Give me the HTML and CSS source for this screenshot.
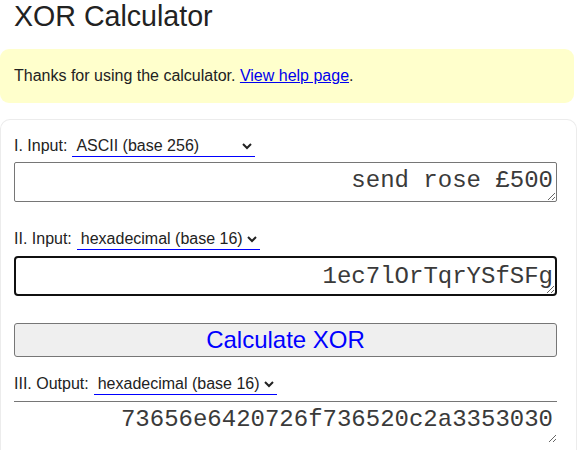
FILE: index.html
```html
<!DOCTYPE html>
<html lang="en">
<head>
<meta charset="utf-8">
<title>XOR Calculator</title>
<link rel="stylesheet" href="styles.css">
</head>
<body>
<h1 class="title">XOR Calculator</h1>
<div class="notice">Thanks for using the calculator. <a class="notice-link" href="#">View help page</a>.</div>
<div class="card">
  <div class="field-row">
    <label class="field-label" for="in1-base">I. Input:</label>
    <select class="base-select" id="in1-base">
      <option>binary (base 2)</option>
      <option>octal (base 8)</option>
      <option>decimal (base 10)</option>
      <option>hexadecimal (base 16)</option>
      <option>base64 (base 64)</option>
      <option selected>ASCII (base 256)</option>
    </select>
  </div>
  <textarea class="value-box" rows="1">send rose £500</textarea>

  <div class="field-row field-row-spaced">
    <label class="field-label" for="in2-base">II. Input:</label>
    <select class="base-select" id="in2-base">
      <option>binary (base 2)</option>
      <option>octal (base 8)</option>
      <option>decimal (base 10)</option>
      <option selected>hexadecimal (base 16)</option>
      <option>base64 (base 64)</option>
      <option>ASCII (base 256)</option>
    </select>
  </div>
  <textarea class="value-box value-box-focused" rows="1">1ec7lOrTqrYSfSFg</textarea>

  <button class="calc-button" type="button">Calculate XOR</button>

  <div class="field-row field-row-after-button">
    <label class="field-label" for="out-base">III. Output:</label>
    <select class="base-select" id="out-base">
      <option>binary (base 2)</option>
      <option>octal (base 8)</option>
      <option>decimal (base 10)</option>
      <option selected>hexadecimal (base 16)</option>
      <option>base64 (base 64)</option>
      <option>ASCII (base 256)</option>
    </select>
  </div>
  <textarea class="value-box value-box-output" rows="1" readonly>73656e6420726f736520c2a3353030</textarea>
</div>
</body>
</html>
```

FILE: styles.css
```css
html, body {
  margin: 0;
  padding: 0;
  background: #ffffff;
}

body {
  font-family: Arial, "Liberation Sans", sans-serif;
  color: #222222;
  font-size: 16px;
  overflow: hidden;
}

.title {
  margin: 0 0 17px 0;
  padding-left: 14px;
  font-size: 28.6px;
  font-weight: normal;
  line-height: 32px;
  color: #222222;
}

.notice {
  margin: 0 11px 16px 0;
  padding: 17px 14px;
  line-height: 20px;
  background: #ffffcc;
  border-radius: 9px;
}

.notice-link {
  color: #0000ee;
  text-decoration: underline;
}

.card {
  margin-right: 8px;
  padding: 16px 18px 0 13px;
  border: 1px solid #ececec;
  border-bottom: 0;
  border-radius: 10px 10px 0 0;
  height: 314px;
}

.field-row {
  display: flex;
  align-items: baseline;
  gap: 5px;
}

.field-row-spaced {
  margin-top: 27px;
}

.field-row-after-button {
  margin-top: 17px;
}

.field-label {
  font-size: 16px;
  color: #222222;
}

.base-select {
  width: 183px;
  height: 21px;
  font-family: Arial, "Liberation Sans", sans-serif;
  font-size: 16px;
  color: #222222;
  background: transparent;
  border: 0;
  border-bottom: 1px solid #0000ff;
  border-radius: 0;
  padding: 0 0 1px 0;
  outline: none;
}

.value-box {
  display: block;
  box-sizing: border-box;
  width: 543px;
  height: 40px;
  margin: 5px 0 0 0;
  padding: 4px 3px 0 3px;
  font-family: "Courier New", "Liberation Mono", monospace;
  font-size: 24px;
  line-height: 27px;
  text-align: right;
  color: #3a3a3a;
  background: #ffffff;
  border: 1px solid #767676;
  border-radius: 2px;
  overflow: hidden;
}

.value-box-focused {
  margin-top: 6px;
  padding: 5px 2px 0 2px;
  border: 2px solid #101010;
  border-radius: 4px;
}

.value-box-output {
  margin-top: 6px;
  height: 42px;
  border: 0;
  border-top: 1px solid #767676;
  border-radius: 0;
  padding-right: 4px;
}

.calc-button {
  display: block;
  box-sizing: border-box;
  width: 543px;
  height: 34px;
  margin-top: 27px;
  padding: 0;
  font-family: Arial, "Liberation Sans", sans-serif;
  font-size: 24px;
  color: #0000ff;
  background: #efefef;
  border: 1px solid #767676;
  border-radius: 3px;
}
```
